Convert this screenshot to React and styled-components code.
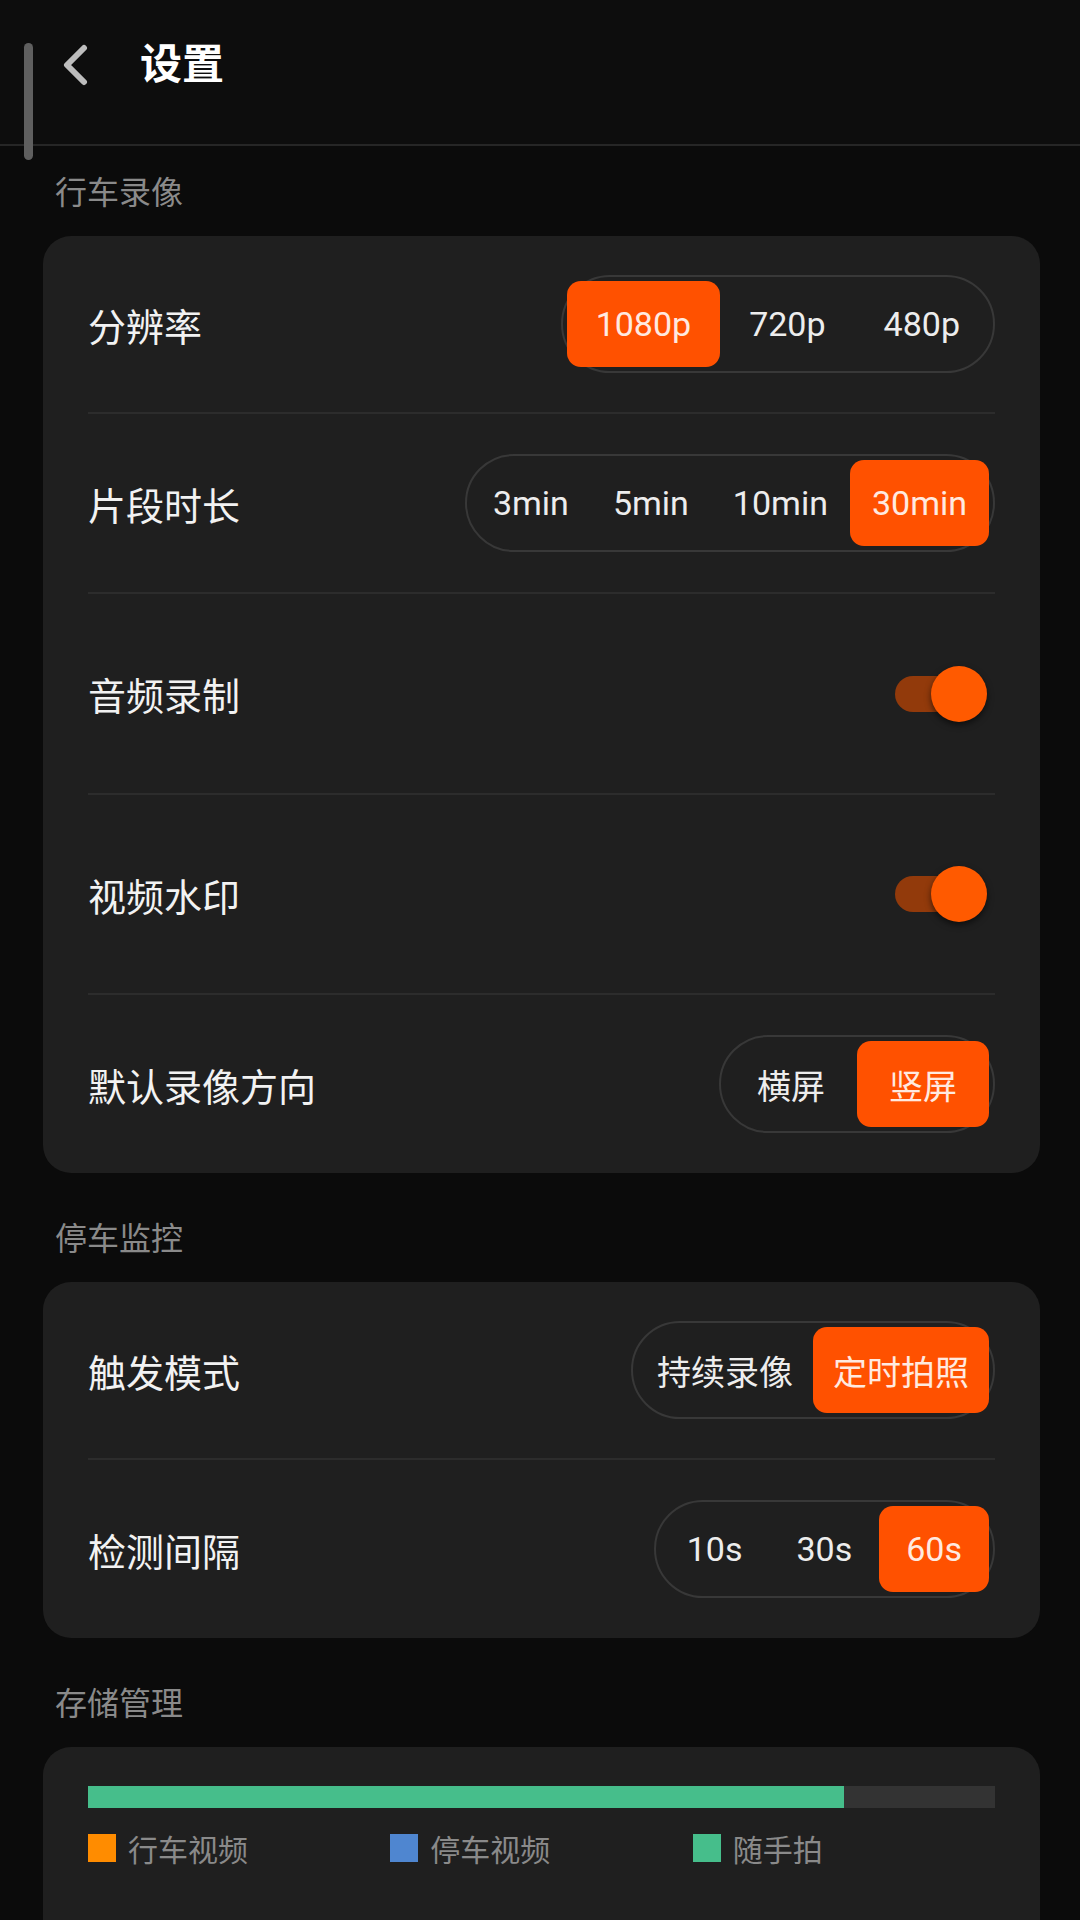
import styled, { createGlobalStyle } from "styled-components";
import { useState } from "react";

const GlobalStyle = createGlobalStyle`
	* {
		box-sizing: border-box;
	}
	body {
		margin: 0;
		background: #0b0b0b;
		font-family: Roboto, "Noto Sans CJK SC", sans-serif;
		color: #f0f0f0;
	}
`;

const Page = styled.div`
	position: relative;
	width: 1080px;
	min-height: 1920px;
	background: #0b0b0b;
	overflow: hidden;
`;

const ScrollThumb = styled.div`
	position: absolute;
	left: 24px;
	top: 43px;
	width: 9px;
	height: 117px;
	border-radius: 5px;
	background: #5f5f5f;
`;

const Header = styled.header`
	display: flex;
	align-items: center;
	gap: 48px;
	height: 146px;
	padding: 0 0 14px 60px;
	background: #0d0d0d;
	border-bottom: 2px solid #262626;
`;

const BackButton = styled.button`
	display: flex;
	align-items: center;
	padding: 0;
	border: none;
	background: none;
	cursor: pointer;
`;

const Title = styled.h1`
	margin: 0;
	font-size: 42px;
	line-height: 56px;
	font-weight: 700;
	color: #ffffff;
`;

const Content = styled.main`
	padding: 0 40px 0 43px;
`;

const SectionTitle = styled.h2`
	margin: ${(p) => (p.$first ? "27px" : "46px")} 0 23px 12px;
	font-size: 32px;
	line-height: 40px;
	font-weight: 400;
	color: #8a8a8a;
`;

const Card = styled.section`
	background: #1f1f1f;
	border-radius: 28px;
	padding: ${(p) => p.$pad || "0 45px"};
`;

const Row = styled.div`
	display: flex;
	align-items: center;
	justify-content: space-between;
	min-height: ${(p) => p.$h || 178}px;
	border-bottom: ${(p) => (p.$last ? "none" : "2px solid #2c2c2c")};
`;

const Label = styled.span`
	font-size: 38px;
	color: #f2f2f2;
`;

const Segmented = styled.div`
	display: flex;
	align-items: center;
	padding: 4px;
	border: 2px solid #383838;
	border-radius: 999px;
`;

const SegButton = styled.button`
	height: 86px;
	padding: 0 ${(p) => p.$px}px;
	border: none;
	border-radius: 14px;
	font-family: inherit;
	font-size: 34px;
	color: ${(p) => (p.$active ? "#ffeae0" : "#ededed")};
	background: ${(p) => (p.$active ? "#ff5100" : "transparent")};
	cursor: pointer;
`;

const SwitchBox = styled.button`
	position: relative;
	width: 92px;
	height: 56px;
	margin-right: 8px;
	padding: 0;
	border: none;
	background: none;
	cursor: pointer;
`;

const Track = styled.span`
	position: absolute;
	left: 0;
	top: 10px;
	width: 72px;
	height: 36px;
	border-radius: 18px;
	background: ${(p) => (p.$on ? "#923a0b" : "#4a4a4a")};
`;

const Knob = styled.span`
	position: absolute;
	top: 0;
	left: ${(p) => (p.$on ? "36px" : "0")};
	width: 56px;
	height: 56px;
	border-radius: 50%;
	background: ${(p) => (p.$on ? "#ff5a00" : "#bdbdbd")};
	box-shadow: 0 3px 6px rgba(0, 0, 0, 0.55);
`;

const Bar = styled.div`
	display: flex;
	height: 22px;
	background: #333333;
`;

const BarPart = styled.div`
	height: 100%;
	background: ${(p) => p.$color};
`;

const Legend = styled.div`
	display: grid;
	grid-template-columns: repeat(3, 1fr);
	margin-top: 18px;
`;

const LegendItem = styled.div`
	display: flex;
	align-items: center;
	gap: 12px;
	font-size: 30px;
	color: #8a8a8a;
`;

const Swatch = styled.span`
	width: 28px;
	height: 28px;
	background: ${(p) => p.$color};
`;

function Segment({ options, value, onChange, px }) {
	return (
		<Segmented>
			{options.map((o) => (
				<SegButton
					key={o}
					$px={px}
					$active={o === value}
					onClick={() => onChange(o)}
				>
					{o}
				</SegButton>
			))}
		</Segmented>
	);
}

function Switch({ on, onToggle }) {
	return (
		<SwitchBox onClick={onToggle}>
			<Track $on={on} />
			<Knob $on={on} />
		</SwitchBox>
	);
}

function App() {
	const [res, setRes] = useState("1080p");
	const [clip, setClip] = useState("30min");
	const [audio, setAudio] = useState(true);
	const [mark, setMark] = useState(true);
	const [orient, setOrient] = useState("竖屏");
	const [trigger, setTrigger] = useState("定时拍照");
	const [interval, setIntervalVal] = useState("60s");

	const storage = [
		{ name: "行车视频", color: "#ff8c00", pct: 0 },
		{ name: "停车视频", color: "#4f86d0", pct: 0 },
		{ name: "随手拍", color: "#46be8b", pct: 83.4 },
	];

	return (
		<>
			<GlobalStyle />
			<Page>
				<Header>
					<BackButton aria-label="返回">
						<svg width="32" height="42" viewBox="0 0 32 42">
							<path
								d="M24 4 L7 21 L24 38"
								fill="none"
								stroke="#bdbdbd"
								strokeWidth="6"
								strokeLinecap="round"
								strokeLinejoin="round"
							/>
						</svg>
					</BackButton>
					<Title>设置</Title>
				</Header>
				<ScrollThumb />

				<Content>
					<SectionTitle $first>行车录像</SectionTitle>
					<Card>
						<Row>
							<Label>分辨率</Label>
							<Segment
								options={["1080p", "720p", "480p"]}
								value={res}
								onChange={setRes}
								px={29}
							/>
						</Row>
						<Row $h={180}>
							<Label>片段时长</Label>
							<Segment
								options={["3min", "5min", "10min", "30min"]}
								value={clip}
								onChange={setClip}
								px={22}
							/>
						</Row>
						<Row $h={201}>
							<Label>音频录制</Label>
							<Switch on={audio} onToggle={() => setAudio(!audio)} />
						</Row>
						<Row $h={200}>
							<Label>视频水印</Label>
							<Switch on={mark} onToggle={() => setMark(!mark)} />
						</Row>
						<Row $last>
							<Label>默认录像方向</Label>
							<Segment
								options={["横屏", "竖屏"]}
								value={orient}
								onChange={setOrient}
								px={32}
							/>
						</Row>
					</Card>

					<SectionTitle>停车监控</SectionTitle>
					<Card>
						<Row>
							<Label>触发模式</Label>
							<Segment
								options={["持续录像", "定时拍照"]}
								value={trigger}
								onChange={setTrigger}
								px={20}
							/>
						</Row>
						<Row $last>
							<Label>检测间隔</Label>
							<Segment
								options={["10s", "30s", "60s"]}
								value={interval}
								onChange={setIntervalVal}
								px={27}
							/>
						</Row>
					</Card>

					<SectionTitle>存储管理</SectionTitle>
					<Card $pad="39px 45px 90px">
						<Bar>
							{storage.map((s) => (
								<BarPart
									key={s.name}
									$color={s.color}
									style={{ width: `${s.pct}%` }}
								/>
							))}
						</Bar>
						<Legend>
							{storage.map((s) => (
								<LegendItem key={s.name}>
									<Swatch $color={s.color} />
									{s.name}
								</LegendItem>
							))}
						</Legend>
					</Card>
				</Content>
			</Page>
		</>
	);
}

export default App;
